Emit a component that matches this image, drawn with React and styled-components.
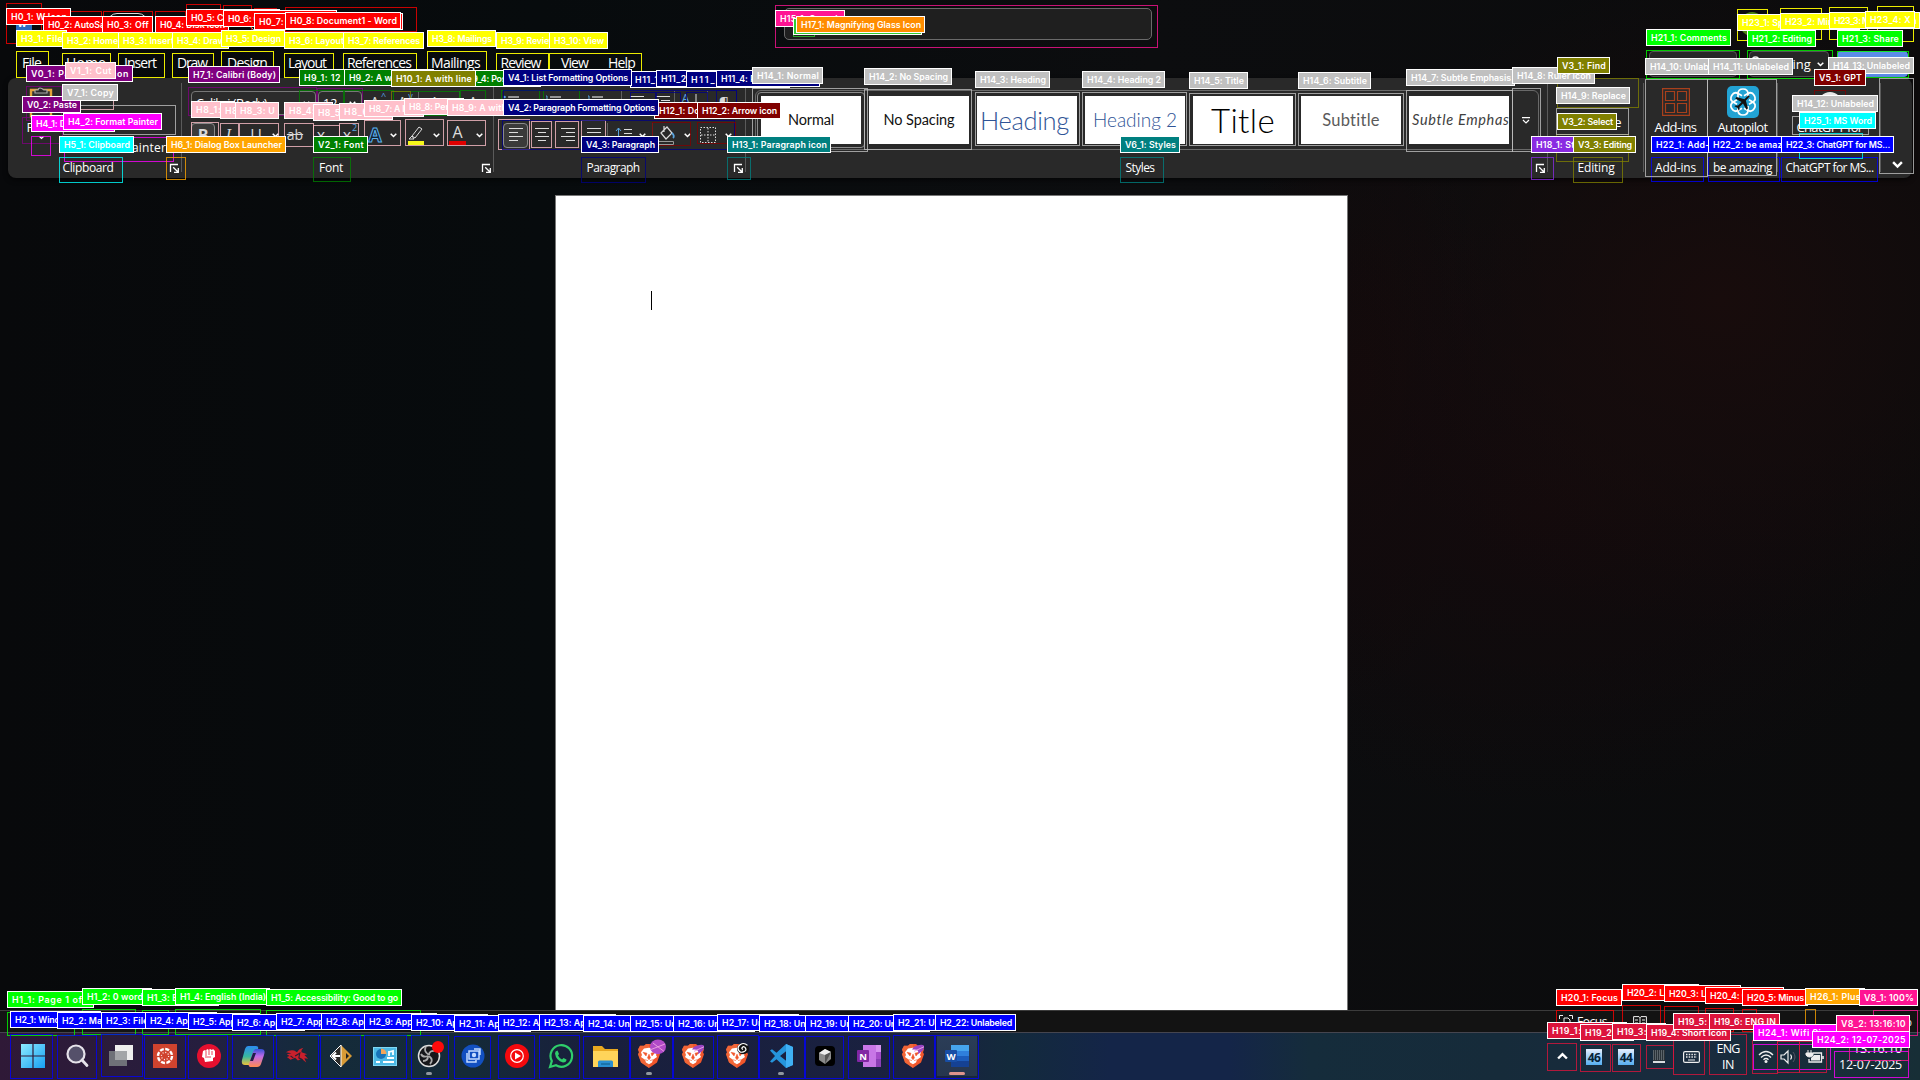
import React, { useLayoutEffect, useRef } from "react";
import styled, { createGlobalStyle, css } from "styled-components";

const Global = createGlobalStyle`
  * { box-sizing: border-box; }
  body { margin: 0; background: #08090a; overflow: hidden; }
  svg { overflow: visible; flex: none; }
`;

/* ---------- text helper: spreads a word over a known width ---------- */
const Word = styled.span`
  display: inline-block;
  white-space: pre;
  flex: none;
`;

function Fit({ w, children, as: Tag = Word, ...rest }) {
  const ref = useRef(null);
  useLayoutEffect(() => {
    const el = ref.current;
    el.style.letterSpacing = "0px";
    const natural = el.getBoundingClientRect().width;
    el.style.letterSpacing = `${(w - natural) / String(children).length}px`;
  }, [w, children]);
  return <Tag ref={ref} {...rest}>{children}</Tag>;
}

/* ---------- page shell ---------- */
const Screen = styled.div`
  position: relative;
  width: 1920px;
  height: 1080px;
  display: flex;
  flex-direction: column;
  overflow: hidden;
  color: #fff;
  font-family: "Open Sans", "Noto Sans", sans-serif;
  font-size: 12px;
  background:
    radial-gradient(ellipse 380px 330px at 1720px 300px, #180c0c 0%, rgba(16, 9, 10, 0) 100%),
    radial-gradient(ellipse 420px 300px at 1540px 510px, #130a0c 0%, rgba(16, 9, 10, 0) 100%),
    radial-gradient(ellipse 130px 320px at 1360px 380px, #140a0b 0%, rgba(16, 9, 10, 0) 100%),
    linear-gradient(90deg, #08090b 0%, #070b0d 28%, #0c0d0f 60%, #0b0b0c 100%);
`;

const TitleBar = styled.header`
  height: 48px;
  flex: none;
  display: grid;
  grid-template-columns: 784px 368px 1fr;
`;
const TitleLeft = styled.div`
  display: flex;
  align-items: center;
  padding-left: 16px;
`;
const AutoSave = styled.div`
  margin-left: 12px;
  width: 50px;
`;
const Toggle = styled.div`
  width: 41px;
  height: 20px;
  margin: 0 0 2px 1px;
  border: 1px solid #ddd;
  border-radius: 10px;
`;
const Disk = styled.div`
  margin-left: 20px;
  width: 50px;
  display: flex;
  gap: 20px;
`;
const Search = styled.div`
  height: 32px;
  margin-top: 8px;
  padding: 7px 12px;
  border: 1px solid #6a6a6a;
  border-radius: 5px;
  background: #1f1f1f;
`;
const TitleRight = styled.div`
  display: flex;
  padding: 12px 12px 0 588px;
  gap: 32px;
  align-items: flex-start;
`;
const Avatar = styled.div`
  width: 24px;
  height: 24px;
  border-radius: 50%;
  background: #4d8412;
`;

const TabRow = styled.nav`
  height: 30px;
  flex: none;
  display: flex;
  padding-left: 11px;
  font-size: 14px;
`;
const Tab = styled.div`
  width: ${(p) => p.$w}px;
  margin-left: ${(p) => p.$gap || 0}px;
  display: flex;
  justify-content: center;
  line-height: 30px;
`;
const TabActions = styled.div`
  margin-left: auto;
  display: flex;
  padding: 3px 12px 0 0;
`;
const Action = styled.div`
  width: ${(p) => p.$w}px;
  height: 26px;
  margin-left: ${(p) => p.$ml || 0}px;
  padding: 0 4px;
  display: flex;
  align-items: center;
  justify-content: flex-end;
  gap: 6px;
  font-size: 13px;
  border: 1px solid ${(p) => p.$fill || "#555"};
  border-radius: 4px;
  background: ${(p) => p.$fill || "#272727"};
`;

const Ribbon = styled.section`
  height: 100px;
  flex: none;
  margin: 0 8px;
  display: flex;
  border-radius: 8px;
  background: #292929;
  box-shadow: 0 2px 5px rgba(0, 0, 0, 0.6);
`;
const Group = styled.div`
  width: ${(p) => p.$w}px;
  flex: none;
  display: flex;
  flex-direction: column;
  background: linear-gradient(#5a5a5a, #5a5a5a) right 5px / 1px 89px no-repeat;
  ${(p) => p.$last && css`background: none;`}
`;
const GroupBody = styled.div`
  height: 80px;
  padding: ${(p) => p.$pad || "0"};
`;
const GroupFoot = styled.div`
  height: 20px;
  display: flex;
  align-items: center;
  padding-right: 3px;
`;
const GroupName = styled.div`
  flex: 1;
  display: flex;
  justify-content: center;
  margin-right: ${(p) => (p.$launch ? 2 : -3)}px;
  line-height: 20px;
`;
const Tools = styled.div`
  height: 26px;
  margin-bottom: ${(p) => p.$mb || 0}px;
  display: flex;
  align-items: center;
`;
const Tool = styled.div`
  width: ${(p) => p.$w}px;
  height: 25px;
  flex: none;
  display: flex;
  align-items: center;
  justify-content: ${(p) => p.$j || "center"};
  gap: ${(p) => p.$g || 7}px;
  font-family: "Open Sans", sans-serif;
  font-size: 16px;
  line-height: 1;
  color: #d8d8d8;
  ${(p) => p.$on && css`border: 1px solid #8a8a8a; border-radius: 4px; background: #3a3a3a;`}
  ${(p) => p.$b && css`font-weight: 700;`}
  ${(p) => p.$i && css`font-family: "Liberation Serif", serif; font-style: italic;`}
  ${(p) => p.$u && css`span { border-bottom: 1px solid #ddd; }`}
  ${(p) => p.$s && css`text-decoration: line-through; font-size: 14px;`}
  sup, sub { font-size: 9px; color: #5aa5e0; margin-left: -6px; }
  sup { align-self: flex-start; }
  sub { align-self: flex-end; }
`;
const Combo = styled.div`
  width: ${(p) => p.$w}px;
  height: 24px;
  margin-right: 2px;
  padding: 0 5px 0 4px;
  display: flex;
  align-items: center;
  justify-content: space-between;
  border: 1px solid #777;
  border-radius: 4px;
  background: #2b2b2b;
  font-size: 12.5px;
`;
const Rule = styled.i`
  width: 1px;
  height: 24px;
  background: #606060;
`;
const ClipGrid = styled.div`
  height: 80px;
  display: grid;
  grid-template-columns: 50px 1fr;
`;
const PasteCol = styled.div`
  display: flex;
  flex-direction: column;
  align-items: center;
  padding: 8px 0 0 16px;
  font-size: 13px;
`;
const ClipList = styled.div`
  display: flex;
  flex-direction: column;
  align-items: flex-end;
  justify-content: flex-end;
  padding: 0 16px 2px 0;
  font-size: 12px;
  line-height: 17px;
`;

const Gallery = styled.div`
  width: 784px;
  height: 60px;
  margin: 12px 0 0 9px;
  padding-left: 1px;
  display: flex;
  align-items: center;
  border: 1px solid #696969;
  border-radius: 6px;
`;
const StyleCell = styled.div`
  width: 108px;
  height: 56px;
  padding: 3px;
  border: 1px solid ${(p) => (p.$on ? "#8c8c8c" : "transparent")};
  border-radius: ${(p) => (p.$on ? 4 : 0)}px;
`;
const StyleCard = styled.div`
  width: 100px;
  height: 48px;
  overflow: hidden;
  display: flex;
  align-items: center;
  justify-content: ${(p) => (p.$left ? "flex-start" : "center")};
  padding-left: ${(p) => p.$left || 0}px;
  background: #fff;
  font-family: Lato, sans-serif;
  font-size: ${(p) => p.$size}px;
  font-weight: ${(p) => p.$weight || 400};
  font-style: ${(p) => (p.$italic ? "italic" : "normal")};
  color: ${(p) => p.$color || "#111"};
  line-height: 48px;
`;
const MoreCell = styled.div`
  flex: 1;
  display: flex;
  justify-content: center;
`;
const EditList = styled.div`
  display: flex;
  flex-direction: column;
  gap: 16px;
  padding: 3px 23px 0 17px;
  align-items: flex-end;
  font-size: 13px;
  line-height: 18px;
  svg { align-self: flex-start; }
`;
const AppCell = styled.div`
  display: flex;
  flex-direction: column;
  align-items: center;
  padding-top: 7px;
  font-size: 13px;
  line-height: 17px;
`;
const AppArt = styled.div`
  height: 34px;
  display: flex;
  align-items: center;
`;
const Collapse = styled.div`
  flex: 1;
  display: flex;
  align-items: flex-end;
  justify-content: center;
  padding: 0 0 10px 1px;
`;

const Canvas = styled.main`
  flex: 1;
  min-height: 0;
  padding: 17px 0 0 555px;
`;
const Paper = styled.div`
  width: 793px;
  height: 815px;
  padding: 95px 0 0 95px;
  background: #fff;
  border: 1px solid #777;
  border-bottom: 0;
`;
const Caret = styled.div`
  width: 1px;
  height: 19px;
  background: #000;
`;

const StatusBar = styled.footer`
  height: 22px;
  flex: none;
  display: flex;
  align-items: center;
  justify-content: flex-end;
  padding-right: 8px;
  border-top: 1px solid #3c3c3c;
  background: #131313;
  font-size: 12px;
`;
const StatusItem = styled.div`
  width: ${(p) => p.$w}px;
  display: flex;
  align-items: center;
  gap: 4px;
  justify-content: ${(p) => p.$j || "flex-start"};
`;

const Taskbar = styled.footer`
  height: 48px;
  flex: none;
  display: flex;
  padding-left: 11px;
  border-top: 1px solid #45454f;
  background: linear-gradient(90deg, #2f1937 0px, #2c1b3a 90px, #251e3e 200px, #1a2543 250px, #152b3a 310px, #142a38 470px, #191f3d 590px, #1a2140 930px, #132a3c 1010px, #142548 1110px, #142548 1230px, #152c3b 1310px, #162b3a 1500px, #192b3e 1700px, #172e36 1920px);
`;
const Pin = styled.div`
  width: 44px;
  height: 47px;
  flex: none;
  display: flex;
  flex-direction: column;
  align-items: center;
  padding-top: 11px;
  ${(p) => p.$active && css`
    background: linear-gradient(#2b3d57, #26364e) 2px 3px / 40px 40px no-repeat;
  `}
`;
const Mark = styled.i`
  width: ${(p) => (p.$wide ? 16 : 6)}px;
  height: 3px;
  margin-top: 4px;
  border-radius: 2px;
  background: ${(p) => (p.$wide ? "#e0948c" : "#9098a0")};
`;
const Tray = styled.div`
  margin-left: auto;
  display: flex;
  align-items: center;
  padding-right: 18px;
`;
const TrayCell = styled.div`
  width: ${(p) => p.$w}px;
  display: flex;
  flex-direction: column;
  align-items: ${(p) => p.$a || "center"};
  font-size: 12.5px;
  line-height: 16px;
`;
const Temp = styled.div`
  width: 16px;
  height: 16px;
  background: linear-gradient(#e8f0ff, #55aef0);
  color: #062238;
  font: 700 12px/17px "Open Sans", sans-serif;
  text-align: center;
  letter-spacing: -0.5px;
`;

/* ---------- annotation overlay ---------- */
const Frame = styled.div`
  position: absolute;
  border: 1px solid ${(p) => p.$c};
  opacity: ${(p) => p.$o || 0.78};
  pointer-events: none;
`;
const Tag = styled.div`
  position: absolute;
  height: 17px;
  padding-left: 4px;
  border: 1px solid #fff;
  background: ${(p) => p.$c};
  color: #fff;
  font: 600 8.8px/16px Inter, "Noto Sans", sans-serif;
  white-space: pre;
`;

const C = {
  red: "#ff0000", yellow: "#ffff00", purple: "#800080", pink: "#ffc0cb", silver: "#c0c0c0",
  magenta: "#ff00ff", cyan: "#00ffff", orange: "#ffa500", green: "#008000", olive: "#808000",
  navy: "#000080", maroon: "#800000", teal: "#008080", deeppink: "#ff1493", lime: "#00ff00",
  limegreen: "#32cd32", darkorange: "#ff8c00", violet: "#8a2be2", blue: "#0000ff", crimson: "#dc143c",
};

/* colour, then boxes as [left, top, right, bottom] */
const frames = [
  ["red", [6,3,42,44],[44,11,102,40],[103,11,153,40],[155,11,186,40],[186,4,221,40],[223,5,252,40],[254,8,277,40],[285,7,417,32]],
  ["lime", [7,1012,75,1036],[82,1009,136,1035],[142,1010,169,1035],[175,1009,261,1035],[266,1010,421,1036],[1646,50,1740,79],[1747,50,1833,79],[1837,51,1909,78]],
  ["blue", [10,1034,53,1079],[57,1035,97,1079],[101,1034,143,1077],[144,1035,186,1079],[188,1035,228,1079],[232,1035,274,1079],[276,1035,319,1079],[320,1035,361,1079],[364,1035,407,1079],[411,1035,449,1079],[454,1036,491,1079],[498,1035,535,1079],[539,1035,580,1079],[583,1036,630,1079],[630,1036,673,1079],[673,1036,714,1079],[717,1035,759,1079],[759,1036,805,1079],[805,1036,844,1079],[848,1036,890,1079],[893,1035,935,1079],[935,1035,979,1079],[1651,157,1704,182],[1708,157,1780,182],[1781,157,1878,182]],
  ["yellow", [16,51,49,78],[62,53,111,78],[118,53,165,78],[172,53,214,78],[221,51,274,79],[284,53,334,78],[343,53,417,78],[427,51,487,78],[496,53,549,78],[549,53,642,78],[1737,9,1768,41],[1780,8,1822,40],[1829,7,1868,40],[1877,6,1914,42]],
  ["purple", [26,86,62,121],[22,117,63,144],[188,87,317,116],[317,88,363,116]],
  ["magenta", [31,136,51,156],[64,137,174,162],[1753,1044,1831,1070],[1834,1051,1909,1078]],
  ["cyan", [59,157,123,183],[1799,133,1863,159]],
  ["orange", [166,157,186,180],[1805,1009,1816,1032]],
  ["pink", [66,95,114,110],[191,122,219,146],[220,123,239,146],[239,123,279,147],[284,123,314,147],[313,125,340,147],[339,123,359,147],[364,120,401,146],[405,119,444,146],[447,120,486,146],[498,119,530,150],[531,121,552,148],[555,121,579,148],[581,120,606,148]],
  ["green", [299,90,344,116],[344,90,394,116],[393,91,460,116],[460,90,486,116],[501,90,540,116],[543,90,580,116],[313,157,351,182]],
  ["olive", [391,91,411,113],[1557,78,1639,108],[1556,134,1629,162],[1573,157,1623,183]],
  ["navy", [503,90,737,116],[502,120,735,150],[630,92,656,114],[656,92,681,114],[686,92,708,114],[716,90,737,114],[581,157,646,183]],
  ["maroon", [652,122,691,146],[697,122,736,144],[1814,90,1846,117]],
  ["teal", [727,157,751,180],[1120,157,1164,183]],
  ["silver", [63,105,176,135],[752,88,868,152],[864,89,972,150],[975,92,1080,146],[1082,92,1187,146],[1189,93,1296,146],[1298,93,1404,146],[1406,90,1513,152],[1512,88,1541,152],[1556,108,1629,135],[1645,79,1708,177],[1707,79,1777,176],[1792,116,1869,135],[1879,78,1914,174]],
  ["deeppink", [775,5,1158,48],[1873,1010,1918,1036],[1849,1044,1909,1061]],
  ["limegreen", [793,13,815,37]],
  ["darkorange", [796,11,826,35]],
  ["violet", [1531,157,1554,180]],
  ["red", [1556,1010,1614,1032],[1622,1005,1661,1032],[1664,1006,1699,1032],[1705,1008,1734,1032],[1742,1009,1757,1032]],
  ["crimson", [1547,1043,1577,1071],[1580,1044,1611,1072],[1612,1044,1641,1072],[1646,1045,1674,1069],[1673,1030,1705,1075],[1709,1034,1747,1075],[1752,1040,1778,1074],[1777,1041,1800,1073],[1799,1041,1827,1073]],
];

/* colour, then tags as [text, left, top, width] */
const tags = [
  ["red", ["H0_1: W Icon",6,8,65],["H0_2: AutoSave",43,16,76],["H0_3: Off",102,16,51],["H0_4: Disk Icon",155,16,74],["H0_5: Curved Arrow",186,9,94],["H0_6: Circular Arrow Icon",223,10,114],["H0_7: Down Arrow Toolbar Icon",254,13,149],["H0_8: Document1 - Word",285,12,116]],
  ["lime", ["H1_1: Page 1 of 1",7,991,87],["H1_2: 0 words",82,988,70],["H1_3: Book Icon",142,989,77],["H1_4: English (India)",175,988,95],["H1_5: Accessibility: Good to go",266,989,136]],
  ["blue", ["H2_1: Windows Icon",10,1011,91],["H2_2: Magnifying Glass",57,1012,110],["H2_3: File Explorer",101,1012,90],["H2_4: App Icon",145,1012,72],["H2_5: App Icon",188,1013,72],["H2_6: App Icon",232,1014,73],["H2_7: App Icon",276,1013,72],["H2_8: App Icon",321,1013,72],["H2_9: App Icon",364,1013,73],["H2_10: App Icon",411,1014,77],["H2_11: App Icon",454,1015,77],["H2_12: App Icon",498,1014,77],["H2_13: App Icon",539,1014,77],["H2_14: Unlabeled",583,1015,82],["H2_15: Unlabeled",630,1015,82],["H2_16: Unlabeled",673,1015,82],["H2_17: Unlabeled",717,1014,82],["H2_18: Unlabeled",759,1015,82],["H2_19: Unlabeled",805,1015,82],["H2_20: Unlabeled",848,1015,82],["H2_21: Unlabeled",893,1014,82],["H2_22: Unlabeled",935,1014,81]],
  ["yellow", ["H3_1: File",16,30,51],["H3_2: Home",62,32,60],["H3_3: Insert",118,32,60],["H3_4: Draw",172,32,57],["H3_5: Design",221,30,64],["H3_6: Layout",284,32,64],["H3_7: References",343,32,81],["H3_8: Mailings",427,30,69],["H3_9: Review",496,32,64],["H3_10: View",549,32,59]],
  ["magenta", ["H4_1: Down Arrow",31,115,84],["H4_2: Format Painter",63,113,99]],
  ["cyan", ["H5_1: Clipboard",59,136,75]],
  ["orange", ["H6_1: Dialog Box Launcher",166,136,120]],
  ["purple", ["H7_1: Calibri (Body)",188,66,92]],
  ["pink", ["H8_1: B",191,101,44],["H8_2: I",220,102,41],["H8_3: U",235,102,44],["H8_4: ab",284,102,49],["H8_5: X",313,104,44],["H8_6: X2",339,103,54],["H8_7: A Icon",364,100,60],["H8_8: Pencil",404,98,60],["H8_9: A with line",447,99,82]],
  ["green", ["H9_1: 12",299,69,46],["H9_2: A with arrow",344,69,90],["H9_3: A Icon",393,70,64],["H9_4: Poster icon",461,70,80]],
  ["olive", ["H10_1: A with line",391,70,85]],
  ["navy", ["H11_1: List Icon",630,71,80],["H11_2: List Icon",656,70,80],["H11_3: Sort Icon",686,71,104],["H11_4: Paragraph icon",716,70,104]],
  ["maroon", ["H12_1: Down Icon",654,102,84],["H12_2: Arrow icon",697,102,84]],
  ["teal", ["H13_1: Paragraph icon",727,136,104]],
  ["silver", ["H14_1: Normal",752,67,71],["H14_2: No Spacing",864,68,88],["H14_3: Heading",975,71,75],["H14_4: Heading 2",1082,71,83],["H14_5: Title",1189,72,59],["H14_6: Subtitle",1298,72,73],["H14_7: Subtle Emphasis",1406,69,109],["H14_8: Ruler Icon",1512,67,83],["H14_9: Replace",1556,87,74],["H14_10: Unlabeled",1645,58,86],["H14_11: Unlabeled",1708,58,85],["H14_12: Unlabeled",1792,95,86],["H14_13: Unlabeled",1828,57,86]],
  ["deeppink", ["H15_1: Search",775,10,70]],
  ["limegreen", ["H16_1: Magnifying Glass Icon",793,18,129]],
  ["darkorange", ["H17_1: Magnifying Glass Icon",796,16,129]],
  ["violet", ["H18_1: Styles",1531,136,66]],
  ["crimson", ["H19_1: Up Icon",1547,1022,80],["H19_2: 46",1580,1024,54],["H19_3: 44",1612,1023,54],["H19_4: Short Icon",1646,1024,85],["H19_5: Keyboard",1673,1013,84],["H19_6: ENG IN",1709,1013,71]],
  ["red", ["H20_1: Focus",1556,989,66],["H20_2: List Icon",1622,984,77],["H20_3: List Icon",1664,985,77],["H20_4: Grid Icon",1705,987,79],["H20_5: Minus",1742,989,66]],
  ["yellow", ["H23_1: Sphere",1737,14,70],["H23_2: Minimize",1780,13,80],["H23_3: Maximize Icon",1829,12,91],["H23_4: X",1865,11,50]],
  ["lime", ["H21_1: Comments",1646,29,85],["H21_2: Editing",1747,30,69],["H21_3: Share",1837,30,66]],
  ["blue", ["H22_1: Add-ins",1651,136,76],["H22_2: be amazing",1708,136,92],["H22_3: ChatGPT for MS...",1781,136,113]],
  ["magenta", ["H24_1: Wifi Signal Icon",1753,1024,115],["H24_2: 12-07-2025",1812,1031,98]],
  ["cyan", ["H25_1: MS Word",1799,112,77]],
  ["orange", ["H26_1: Plus",1805,988,60]],
  ["purple", ["V0_1: Paste app icon",26,65,107],["V0_2: Paste",22,96,59]],
  ["pink", ["V1_1: Cut",65,62,51]],
  ["green", ["V2_1: Font",313,136,55]],
  ["olive", ["V3_1: Find",1557,57,53],["V3_2: Select",1557,113,60],["V3_3: Editing",1573,136,63]],
  ["navy", ["V4_1: List Formatting Options",503,69,129],["V4_2: Paragraph Formatting Options",503,99,156],["V4_3: Paragraph",581,136,78]],
  ["maroon", ["V5_1: GPT",1814,69,52]],
  ["teal", ["V6_1: Styles",1120,136,60]],
  ["silver", ["V7_1: Copy",62,84,56]],
  ["deeppink", ["V8_1: 100%",1859,989,59],["V8_2: 13:16:10",1836,1015,74]],
];

function Annotations() {
  return (
    <>
      {frames.map(([c, ...list], g) => list.map(([l, t, r, b], i) => (
        <Frame key={`f${g}-${i}`} $c={C[c]} $o={c === "yellow" ? 0.92 : undefined} style={{ left: l, top: t, width: r - l, height: b - t }} />
      )))}
      {tags.map(([c, ...list], g) => list.map(([text, x, y, w], i) => (
        <Tag key={`t${g}-${i}`} $c={C[c]} style={{ left: x, top: y, width: w }}>
          <Fit w={w - 9}>{text}</Fit>
        </Tag>
      )))}
    </>
  );
}

/* ---------- small icons ---------- */
const Svg = ({ s = 16, w, h, vb, children, ...r }) => (
  <svg width={w || s} height={h || s} viewBox={vb || `0 0 ${w || s} ${h || s}`} fill="none" {...r}>{children}</svg>
);
const Chevron = ({ s = 7, c = "#fff", up }) => (
  <Svg w={s} h={s * 0.6} vb="0 0 10 6"><path d={up ? "M1 5 5 1 9 5" : "M1 1 5 5 9 1"} stroke={c} strokeWidth="2.2" /></Svg>
);
const Launcher = () => (
  <Svg s={9}><path d="M.5 8V.5H8M3.2 3.2 8 8M8.300 4V8.300H4" stroke="#fff" strokeWidth="1.300" /></Svg>
);
const Lines = ({ rows, arrow }) => (
  <Svg w={16} h={14}>
    {rows.map(([a, b], i) => <path key={i} d={`M${a} ${i * 4 + 0.5}H${b}`} stroke="#ddd" />)}
    {arrow}
  </Svg>
);
const ALeft = [[1, 15], [1, 10], [1, 15], [1, 10]];
const ACenter = [[1, 15], [4, 12], [1, 15], [4, 12]];
const ARight = [[1, 15], [6, 15], [1, 15], [6, 15]];
const AFull = [[1, 15], [1, 15], [1, 15], [1, 15]];

const BulletList = ({ n }) => (
  <Svg w={16} h={14}>
    {[1, 6, 11].map((y) => (
      <g key={y}>
        {n ? <path d={`M1 ${y - 1}h1v3`} stroke="#5aa5e0" /> : <circle cx="1.5" cy={y} r="1.3" fill="#5aa5e0" />}
        <path d={`M5 ${y}H16`} stroke="#ddd" strokeWidth="1.2" />
      </g>
    ))}
  </Svg>
);

const Brave = ({ badge }) => (
  <Svg w={22} h={24} vb="3 1 22 26" preserveAspectRatio="none">
    <path d="M5 3h4l2-2h6l2 2h4l2 4-1 3 1 2-3 9-8 6-8-6-3-9 1-2-1-3z" fill="#f1562b" />
    <path d="M5 3h4l2-2h3v26l-8-6-3-9 1-2-1-3z" fill="#f47240" opacity=".6" />
    <path d="m14 5 5 1 3 4-1 3 1 2-4 3-1 3-3 2-3-2-1-3-4-3 1-2-1-3 3-4z" fill="#fff" />
    <path d="m8 10 4 1-1 3zm12 0-4 1 1 3zm-6 2 1.500 4L14 18l-1.500-2zM10 18l3 1M18 18l-3 1" fill="#f1562b" stroke="#f1562b" strokeWidth=".6" />
    {badge === "big" && <g><circle cx="23" cy="4" r="8" fill="#b04ac8" /><path d="m16 7 14-6M18 0l11 9" stroke="#ec9ee0" /></g>}
    {badge === "small" && <g><path d="M15 4q8-4 10-1 1 5-6 9 2-6-6-5z" fill="#9a45c4" /><path d="m15 9 10-5" stroke="#ec9ee0" /></g>}
    {badge === "spiral" && <g><circle cx="20" cy="6" r="6" fill="#111" /><path d="M20 7q-2-1-.5-2.500t3 1-2 4-5-2 2-6 7 1" stroke="#fff" strokeWidth="1.300" /></g>}
  </Svg>
);

const pins = [
  <Svg s={24} key="win"><defs><linearGradient id="w" x2="1" y2="1"><stop stopColor="#8deaff" /><stop offset="1" stopColor="#16a0f2" /></linearGradient></defs><path d="M0 0h11.400v11.400H0zM12.600 0H24v11.400H12.600zM0 12.600h11.400V24H0zM12.600 12.600H24V24H12.600z" fill="url(#w)" /></Svg>,
  <Svg s={24} key="find"><circle cx="11" cy="10" r="8.500" fill="#55506a" stroke="#e6e2ea" strokeWidth="2.200" /><path d="m17 16 5 5.500" stroke="#e6e2ea" strokeWidth="2.800" strokeLinecap="round" /></Svg>,
  <Svg s={24} key="task"><path d="M6 1h18v15H6z" fill="#eee" /><path d="M0 7h18v15H0z" fill="#777b80" opacity=".9" /><path d="M6 7h12v9H6z" fill="#a3a5a8" /></Svg>,
  <Svg s={24} key="canvas"><path d="M0 0h24v24H0z" fill="#d0432e" /><circle cx="12" cy="12" r="7" stroke="#fff" strokeWidth="2.400" strokeDasharray="4 1.500" /><circle cx="12" cy="12" r="3.600" stroke="#fff" strokeWidth="1.200" strokeDasharray="1 1.800" /></Svg>,
  <Svg s={24} key="fist"><circle cx="12" cy="12" r="12" fill="#e5102f" /><path d="M6 7 8 6l1 1 1-2 2 1 1-1 2 1 1-1 2 2v6l-2 1v3l-8 1-1-4-2-1z" fill="#fff" /><path d="M9 7v5M12 6v5M15 7v4M8 13h6" stroke="#e5102f" strokeWidth=".8" /></Svg>,
  <Svg s={24} key="copilot"><defs><linearGradient id="c1" x2="0" y2="1"><stop stopColor="#2c8cf0" /><stop offset=".55" stopColor="#38b8a0" /><stop offset="1" stopColor="#ecc33a" /></linearGradient><linearGradient id="c2" x2="0" y2="1"><stop stopColor="#3350d8" /><stop offset=".4" stopColor="#c06ae8" /><stop offset="1" stopColor="#ff8a50" /></linearGradient></defs><path d="M7 2h8q3 0 2 3l-4 13q-1 3-4 3H4q-4 0-3-5L4 5q1-3 3-3z" fill="url(#c1)" /><path d="M15 5h5q5 0 3 6l-3 9q-1 3-4 3H9q-2-1-1-3l4-12q1-3 3-3z" fill="url(#c2)" /><path d="m12 9-3 8h3l3-8z" fill="#221e48" /></Svg>,
  <Svg s={24} vb="0 0 26 26" key="dragon"><path d="M1 9q4-3 9-2l3 2q2-4 7-5-3 3-2 5l6 2-3 1 4 4-4-.500 2 4.500-5-4-4 2-3-3-5 2-4-3 3-1-3-2 5-1z" fill="#c9202c" /><path d="m11 13 5-3-1 5 4 2M6 13l3 2" stroke="#2a1d30" strokeWidth="1.200" /></Svg>,
  <Svg s={24} key="arrows"><path d="M12 1 23 12 12 23 1 12z" fill="#d79a35" /><path d="M12 1v22L1 12z" fill="#2b2a28" stroke="#fff" /><path d="M3 12h8M7 8.500 3.500 12 7 15.500" stroke="#fff" strokeWidth="2" /><path d="m17 9 3 3-3 3z" fill="#1f1f1f" /></Svg>,
  <Svg s={24} key="panel"><path d="M0 3h24v19H0z" fill="#7fd8f4" /><path d="M1 4h22v17H1z" fill="#4cb8e4" /><circle cx="8" cy="10" r="5" fill="#1873b8" /><path d="M8 10V4.500A5.500 5.500 0 0 1 13.500 10z" fill="#f3a55a" /><path d="M16 7v5m0-4 4-1v4M14 14h7M3 18h4m3 0h11" stroke="#fff" strokeWidth="1.800" /></Svg>,
  <Svg s={24} key="obs"><circle cx="12" cy="12" r="10.500" fill="#16171a" stroke="#ddd" strokeWidth="1.500" /><path d="M12 11q-6-4-3-8M12 11q0-5 7-4M11 12q-5 2-7-2M12 12q5 4 1 8M11 12q0 5-5 5" stroke="#aaa" strokeWidth="1.800" /><circle cx="21" cy="3" r="6" fill="#ff0a0a" /></Svg>,
  <Svg s={24} key="sync"><circle cx="12" cy="12" r="11.500" fill="#124fc0" /><path d="M8 7h10v8H8zM6 9v9h9v-2M13 5h6v6" stroke="#c4dcff" strokeWidth="1.500" /><circle cx="13" cy="11" r="2.200" fill="#c4dcff" /></Svg>,
  <Svg s={24} key="music"><circle cx="12" cy="12" r="12" fill="#f5090d" /><circle cx="12" cy="12" r="6.300" stroke="#fff" strokeWidth="1.200" /><path d="m10 8.500 6 3.500-6 3.500z" fill="#fff" /></Svg>,
  <Svg s={24} key="wa"><path d="M1 23 2.800 17A10.800 10.800 0 1 1 7 21.300z" stroke="#2fce6b" strokeWidth="2.200" /><path d="M8.500 6.500 10 10l-1 1.500q1.500 3 4 4l1.500-1.500 3 1.500q0 3-3.500 3-7-2-8-9 0-2.500 2.500-3z" fill="#2fce6b" /></Svg>,
  <Svg w={25} h={24} key="folder"><path d="M0 2h9l3 3h13v17H0z" fill="#e9a820" /><path d="M0 7h25v16H0z" fill="#ffd45a" /><path d="M5 23v-5q0-1.500 1.500-1.500h12q1.500 0 1.500 1.500v5z" fill="#2a8fd0" /><path d="M8 20h9" stroke="#176a9c" strokeWidth="1.500" /></Svg>,
  <Brave key="b1" badge="big" />,
  <Brave key="b2" badge="small" />,
  <Brave key="b3" badge="spiral" />,
  <Svg s={24} key="code"><path d="M17 0 7.500 8.800 3 5.300 1 6.500 6 12l-5 5.500 2 1.200 4.500-3.500L17 24l7-3V3zM18 6.500v11L11 12z" fill="#2595dc" fillRule="evenodd" /><path d="m17 0 7 3v18l-7 3z" fill="#3fb0f4" /></Svg>,
  <Svg s={24} key="cube"><rect x="2" y="2" width="20" height="20" rx="4" fill="#000" /><path d="m6 9 6-4 6 3v7l-6 5-6-4z" fill="#8b8b8b" /><path d="m6 9 6-4 6 3-6 3z" fill="#eee" /><path d="m12 11 6-3-6 12z" fill="#555" /></Svg>,
  <Svg s={24} key="note"><path d="M6 1h18v22H6z" fill="#c876e6" /><path d="M19 1h5v7h-5z" fill="#d693ef" /><path d="M19 8h5v7h-5z" fill="#a54cc9" /><path d="M19 15h5v8h-5z" fill="#8b3fb5" /><rect y="6" width="12" height="12" rx="1" fill="#8226a4" /><text x="6" y="15.500" textAnchor="middle" fill="#fff" fontFamily="Open Sans" fontWeight="700" fontSize="9.500">N</text></Svg>,
  <Brave key="b4" badge="small" />,
  <Svg s={24} key="word"><path d="M6 1h18v22H6z" fill="#2f7fdc" /><path d="M6 1h18v6H6z" fill="#46a5ee" /><path d="M6 12h18v5H6z" fill="#1c5cbc" /><path d="M6 17h18v6H6z" fill="#154193" /><rect y="6" width="12" height="12" rx="1" fill="#184ea5" /><text x="6" y="15.500" textAnchor="middle" fill="#fff" fontFamily="Open Sans" fontWeight="700" fontSize="9.500">W</text></Svg>,
];

const tabs = [["File", 41, 19], ["Home", 54, 40, 7], ["Insert", 54, 32], ["Draw", 50, 30], ["Design", 60, 40], ["Layout", 60, 38], ["References", 84, 64], ["Mailings", 69, 49], ["Review", 61, 40], ["View", 47, 27], ["Help", 47, 27]];
const cards = [
  { t: "Normal", w: 46, $size: 14.5 },
  { t: "No Spacing", w: 71, $size: 14.5 },
  { t: "Heading", w: 89, $size: 25.5, $weight: 300, $color: "#2f5496", $left: 3 },
  { t: "Heading 2", w: 84, $size: 19, $weight: 300, $color: "#2f5496" },
  { t: "Title", w: 64, $size: 33, $weight: 300, $color: "#000" },
  { t: "Subtitle", w: 58, $size: 16.5, $color: "#5a5a5a" },
  { t: "Subtle Emphasis", w: 108, $size: 14.5, $italic: true, $color: "#404040", $left: 3 },
];

function Foot({ name, w, launch }) {
  return <GroupFoot><GroupName $launch={launch}><Fit w={w}>{name}</Fit></GroupName>{launch && <Launcher />}</GroupFoot>;
}

export default function App() {
  return (
    <Screen>
      <Global />
      <TitleBar>
        <TitleLeft>
          <Svg s={16}><rect y="0" width="16" height="15" rx="1" fill="#2b6cc0" /><text x="6" y="11" textAnchor="middle" fill="#fff" fontFamily="Open Sans" fontWeight="700" fontSize="9">W</text></Svg>
          <AutoSave>AutoSave</AutoSave>
          <AutoSave><Toggle /></AutoSave>
          <Disk>
            <Svg s={16}><path d="M1 1h11l3 3v11H1z" stroke="#ddd" /></Svg>
            <Svg s={16}><path d="M3 2v5h5M3 7q5-6 10 0t-5 8" stroke="#ddd" /></Svg>
            <Svg s={16}><circle cx="8" cy="8" r="6" stroke="#ddd" /></Svg>
          </Disk>
        </TitleLeft>
        <Search><Svg s={16}><circle cx="7" cy="7" r="5" stroke="#ccc" /><path d="m11 11 4 4" stroke="#ccc" /></Svg></Search>
        <TitleRight><Avatar /></TitleRight>
      </TitleBar>

      <TabRow>
        {tabs.map(([t, w, tw, g]) => <Tab key={t} $w={w} $gap={g}><Fit w={tw}>{t}</Fit></Tab>)}
        <TabActions>
          <Action $w={88} />
          <Action $w={80} $ml={12}>
            <Svg w={14} h={17}><path d="M3 5q0-4 3.500-4T10 5 6 9L2 15" stroke="#eee" strokeWidth="1.300" /></Svg>
            <Fit w={42}>Editing</Fit><Chevron />
          </Action>
          <Action $w={71} $ml={8} $fill="#5c8de8" />
        </TabActions>
      </TabRow>

      <Ribbon>
        <Group $w={174}>
          <GroupBody>
            <ClipGrid>
              <PasteCol>
                <Svg w={24} h={32}><path d="M2 4h20v27H2z" stroke="#e3a33c" strokeWidth="2.400" fill="#333" /><path d="M6 7V4h3q1-4 6 0h3v3z" fill="#292929" stroke="#aaa" strokeWidth="1.200" /></Svg>
                <Fit w={29}>Paste</Fit>
                <Chevron s={5} />
              </PasteCol>
              <ClipList><Fit w={86}>Format Painter</Fit></ClipList>
            </ClipGrid>
          </GroupBody>
          <Foot name="Clipboard" w={51} launch />
        </Group>

        <Group $w={312}>
          <GroupBody $pad="12px 0 0 9px">
            <Tools $mb={6}>
              <Combo $w={125}><Fit w={71}>Calibri (Body)</Fit><Chevron /></Combo>
              <Combo $w={44}>12<Chevron /></Combo>
              <Tool $w={28}>A<sup>^</sup></Tool>
              <Tool $w={26}>A<sup>v</sup></Tool>
              <Rule />
              <Tool $w={40}>Aa</Tool>
              <Rule />
              <Tool $w={26}>A</Tool>
            </Tools>
            <Tools>
              <Tool $w={24} $on $b>B</Tool>
              <Tool $w={27} $i>I</Tool>
              <Tool $w={37} $u $g={10} $j="flex-end"><span>U</span><Chevron /></Tool>
              <Tool $w={32} $s>ab</Tool>
              <Tool $w={26}>x<sub>2</sub></Tool>
              <Tool $w={26}>x<sup>2</sup></Tool>
              <Tool $w={38}>
                <Svg w={16} h={18}><text x="8" y="16" textAnchor="middle" fontFamily="Open Sans" fontWeight="700" fontSize="19" fill="#123" stroke="#5ab0ee">A</text></Svg><Chevron />
              </Tool>
              <Tool $w={45} $g={9}>
                <Svg w={17} h={20}><path d="M5 11 12 2l3 2-7 9zM5 11l-3 3h5z" stroke="#ddd" /><path d="M1 16h16v4H1z" fill="#f7f71a" /></Svg><Chevron />
              </Tool>
              <Tool $w={40} $g={10}>
                <Svg w={17} h={20}><text x="8.500" y="13" textAnchor="middle" fontFamily="Open Sans" fontSize="16" fill="#ddd">A</text><path d="M0 16h17v4H0z" fill="#e00000" /></Svg><Chevron />
              </Tool>
            </Tools>
          </GroupBody>
          <Foot name="Font" w={24} launch />
        </Group>

        <Group $w={252}>
          <GroupBody $pad="12px 0 0 9px">
            <Tools $mb={6}>
              <Tool $w={42} $j="flex-start"><BulletList /></Tool>
              <Tool $w={42} $j="flex-start"><BulletList n /></Tool>
              <Tool $w={34} $j="flex-start"><BulletList n /></Tool>
              <Rule />
              <Tool $w={30}><Lines rows={AFull} /></Tool>
              <Tool $w={22}><Lines rows={ARight} arrow={<path d="m3 4-2 2 2 2" stroke="#5aa5e0" />} /></Tool>
              <Rule />
              <Tool $w={32}>
                <Svg w={18} h={20}><text x="0" y="9" fontFamily="Open Sans" fontSize="11" fill="#5aa5e0">A</text><path d="M14 1v17m-3-3 3 3 3-3" stroke="#ddd" /></Svg>
              </Tool>
              <Rule />
              <Tool $w={32}>¶</Tool>
            </Tools>
            <Tools>
              <Tool $w={25} $on><Lines rows={ALeft} /></Tool>
              <Tool $w={27}><Lines rows={ACenter} /></Tool>
              <Tool $w={26}><Lines rows={ARight} /></Tool>
              <Tool $w={26}><Lines rows={AFull} /></Tool>
              <Rule />
              <Tool $w={44}>
                <Svg w={17} h={16}><path d="M3.500 1v14M1 4l2.500-3L6 4M1 12l2.500 3L6 12" stroke="#5aa5e0" /><path d="M9 2.500h8M9 6.500h8M9 10.500h8M9 14.500h8" stroke="#ddd" /></Svg><Chevron />
              </Tool>
              <Rule />
              <Tool $w={43} $g={9}>
                <Svg w={17} h={20}><path d="m3 8 6-6 5 6-6 6zM6 1v6" stroke="#ddd" strokeWidth="1.200" /><path d="M14 8q3 3 1 5" stroke="#5aa5e0" strokeWidth="1.800" /><path d="M.5 16.500h15v3H.5z" stroke="#999" /></Svg><Chevron />
              </Tool>
              <Tool $w={40} $g={9}>
                <Svg s={16}><path d="M.5.5h15v15H.5zM8 1v14M1 8h14" stroke="#ddd" strokeDasharray="1.500 1.500" /></Svg><Chevron />
              </Tool>
            </Tools>
          </GroupBody>
          <Foot name="Paragraph" w={53} launch />
        </Group>

        <Group $w={802}>
          <GroupBody>
            <Gallery>
              {cards.map(({ t, w, ...p }, i) => (
                <StyleCell key={t} $on={i === 0}><StyleCard {...p}><Fit w={w}>{t}</Fit></StyleCard></StyleCell>
              ))}
              <MoreCell><Svg w={8} h={7}><path d="M0 .6h8M1 3l3 3 3-3" stroke="#fff" strokeWidth="1.200" /></Svg></MoreCell>
            </Gallery>
          </GroupBody>
          <Foot name="Styles" w={29} launch />
        </Group>

        <Group $w={96}>
          <GroupBody>
            <EditList>
              <Svg s={16}><circle cx="6" cy="11" r="4" stroke="#ddd" /></Svg>
              <Fit w={44}>Replace</Fit>
            </EditList>
          </GroupBody>
          <Foot name="Editing" w={37} />
        </Group>

        <Group $w={63} $last>
          <GroupBody>
            <AppCell>
              <AppArt><Svg s={28}><path d="M.6.6h26.800v26.800H.6zM3.500 3.500h9v9h-9zM15.500 3.500h9v9h-9zM3.500 15.500h9v9h-9zM15.500 15.500h9v9h-9z" stroke="#a8401c" strokeWidth="1.200" /></Svg></AppArt>
              <Fit w={42}>Add-ins</Fit>
            </AppCell>
          </GroupBody>
          <Foot name="Add-ins" w={41} />
        </Group>

        <Group $w={71}>
          <GroupBody>
            <AppCell>
              <AppArt>
                <Svg s={32}>
                  <rect width="32" height="32" rx="5" fill="#22a3d4" />
                  {[0, 60, 120, 180, 240, 300].map((a) => (
                    <path key={a} transform={`rotate(${a} 16 16)`} d="M11 12V8q0-5 5-5t5 5v4" stroke="#fff" strokeWidth="1.700" />
                  ))}
                  <path transform="rotate(45 16 16)" d="M15 8q1-2 2 0v5l7 4v2l-7-2v5l2 2v1l-3-1-3 1v-1l2-2v-5l-7 2v-2l7-4z" fill="#111" />
                </Svg>
              </AppArt>
              <Fit w={50}>Autopilot</Fit>
            </AppCell>
          </GroupBody>
          <Foot name="be amazing" w={59} />
        </Group>

        <Group $w={103}>
          <GroupBody>
            <AppCell>
              <AppArt><Svg s={24}><circle cx="12" cy="14" r="12" fill="#e8e8e8" /><path d="M8 14q4-6 8 0t-8 4z" stroke="#333" /></Svg></AppArt>
              <Fit w={66}>ChatGPT for</Fit>
              <Fit w={48}>MS Word</Fit>
            </AppCell>
          </GroupBody>
          <Foot name="ChatGPT for MS..." w={88} />
        </Group>
        <Collapse><Chevron s={11} /></Collapse>
      </Ribbon>

      <Canvas><Paper><Caret /></Paper></Canvas>

      <StatusBar>
        <StatusItem $w={74}>
          <Svg s={14}><path d="M.5 4V.5H4M10 .5h3.500V4M.5 10v3.500H4" stroke="#eee" /><path d="M5 3h4l2 2v7H5z" stroke="#eee" /></Svg>
          <Fit w={30}>Focus</Fit>
        </StatusItem>
        <StatusItem $w={222}>
          <Svg w={14} h={12}><path d="M7 1v10M.6.600H6l1 1 1-1h5.400v10.400H8l-1 1-1-1H.6zM2 4h3M2 7h3M9 4h3M9 7h3" stroke="#eee" /></Svg>
        </StatusItem>
        <StatusItem $w={57} $j="flex-end">100%</StatusItem>
      </StatusBar>

      <Taskbar>
        {pins.map((p, i) => (
          <Pin key={i} $active={i === 21}>
            {p}
            {[9, 14, 17].includes(i) && <Mark />}
            {i === 21 && <Mark $wide />}
          </Pin>
        ))}
        <Tray>
          <TrayCell $w={32}><Chevron s={11} up /></TrayCell>
          <TrayCell $w={32}><Temp>46</Temp></TrayCell>
          <TrayCell $w={32}><Temp>44</Temp></TrayCell>
          <TrayCell $w={34}>
            <Svg w={12} h={13}>
              <path d="M0 0h12v11H0z" fill="#2a3238" />
              {[1, 3, 5, 7, 9].map((y) => <path key={y} d={`M0 ${y}H12`} stroke="#8d959c" strokeDasharray="1 1" />)}
              <path d="M0 12h12" stroke="#d8dde0" strokeWidth="2" />
            </Svg>
          </TrayCell>
          <TrayCell $w={30}>
            <Svg w={17} h={12}><rect x=".6" y=".6" width="15.800" height="10.800" rx="1.500" stroke="#eee" strokeWidth="1.200" /><path d="M3 3.500h11M3 6h11" stroke="#eee" strokeDasharray="1.500 1.200" strokeWidth="1.300" /><path d="M5 9h7" stroke="#eee" /></Svg>
          </TrayCell>
          <TrayCell $w={44}><Fit w={23}>ENG</Fit><Fit w={12}>IN</Fit></TrayCell>
          <TrayCell $w={32}>
            <Svg w={16} h={13}><path d="M1 5q7-7 14 0M3 7.500q5-5 10 0M5.500 9.800q2.500-2.500 5 0" stroke="#eee" strokeWidth="1.400" /><circle cx="8" cy="11.500" r="1.500" fill="#eee" /></Svg>
          </TrayCell>
          <TrayCell $w={12}>
            <Svg w={17} h={14}><path d="M1 5h3l4-4v12L4 9H1z" stroke="#eee" strokeWidth="1.200" /><path d="M10.500 4.500q2 2.500 0 5" stroke="#eee" strokeWidth="1.200" /><path d="M13 2q4 5 0 10" stroke="#556" /></Svg>
          </TrayCell>
          <TrayCell $w={41}>
            <Svg w={18} h={14}><path d="M7 3h8.500v9H3V9" stroke="#eee" strokeWidth="1.300" /><path d="M8 5h6v5.500H5V8z" fill="#eee" /><path d="M17 6v3" stroke="#eee" strokeWidth="1.600" /><path d="M2 0v3M5 0v3M0 3h7v2q-1 2-3.500 2T0 5z" fill="#eee" stroke="#eee" /></Svg>
          </TrayCell>
          <TrayCell $w={67} $a="flex-end"><Fit w={49}>13:16:10</Fit><Fit w={63}>12-07-2025</Fit></TrayCell>
        </Tray>
      </Taskbar>

      <Annotations />
    </Screen>
  );
}
